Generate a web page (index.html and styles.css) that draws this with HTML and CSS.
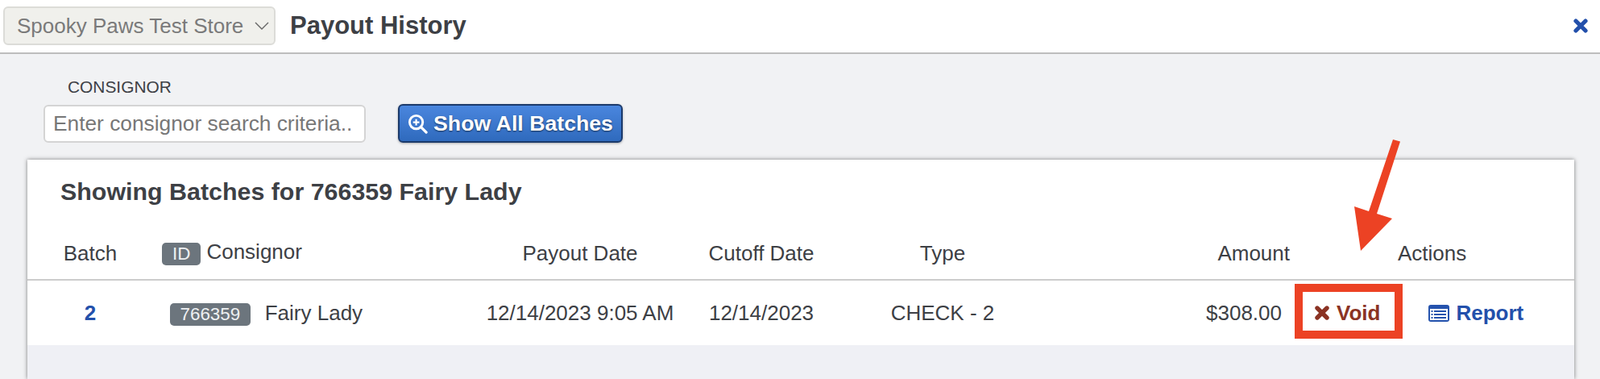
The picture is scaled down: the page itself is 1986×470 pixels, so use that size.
FILE: index.html
```html
<!DOCTYPE html>
<html lang="en">
<head>
    <meta charset="UTF-8">
    <meta name="viewport" content="width=device-width, initial-scale=1.0">
    <title>Payout History</title>
    <link rel="stylesheet" href="styles.css">
</head>
<body>
    <header class="top-bar">
        <div class="store-select">
            <span>Spooky Paws Test Store</span>
            <svg class="chevron" viewBox="0 0 18 10" width="18" height="10"><path d="M1 1l8 8 8-8" fill="none" stroke="#666" stroke-width="1.4"/></svg>
        </div>
        <h1 class="page-title">Payout History</h1>
        <svg class="close-icon" viewBox="0 0 18 18" width="18" height="18"><path d="M3 3l12 12M15 3L3 15" stroke="#2350ab" stroke-width="5.2" stroke-linecap="round"/></svg>
    </header>

    <main class="content">
        <div class="search-block">
            <label class="search-label" for="consignor">CONSIGNOR</label>
            <div class="search-row">
                <input class="search-input" id="consignor" type="text" placeholder="Enter consignor search criteria..">
                <button class="show-btn" type="button">
                    <svg viewBox="0 0 26 26" width="25" height="25"><circle cx="11" cy="11" r="8.5" fill="none" stroke="#fff" stroke-width="3"/><path d="M17 17l7 7" stroke="#fff" stroke-width="3.4" stroke-linecap="round"/><path d="M11 7v8M7 11h8" stroke="#fff" stroke-width="2.2"/></svg>
                    Show All Batches
                </button>
            </div>
        </div>

        <section class="card">
            <h2 class="card-title">Showing Batches for 766359 Fairy Lady</h2>
            <div class="grid head-row">
                <div class="center">Batch</div>
                <div class="consignor-head"><span class="badge">ID</span> Consignor</div>
                <div class="center">Payout Date</div>
                <div class="center">Cutoff Date</div>
                <div class="center">Type</div>
                <div class="right">Amount</div>
                <div class="actions-head">Actions</div>
            </div>
            <div class="grid data-row">
                <div class="center"><a class="batch-link" href="#">2</a></div>
                <div class="consignor-cell"><span class="badge">766359</span> Fairy Lady</div>
                <div class="center">12/14/2023 9:05 AM</div>
                <div class="center">12/14/2023</div>
                <div class="center">CHECK - 2</div>
                <div class="right amount">$308.00</div>
                <div class="actions">
                    <a class="void-link" href="#">
                        <svg viewBox="0 0 18 18" width="18" height="18"><path d="M3 3l12 12M15 3L3 15" stroke="#8b3324" stroke-width="5.4" stroke-linecap="round"/></svg>
                        Void
                    </a>
                    <a class="report-link" href="#">
                        <svg viewBox="0 0 26 21" width="26" height="21"><rect width="26" height="21" rx="3" fill="#2553ad"/><rect x="2" y="5" width="22" height="14" fill="#fff"/><path d="M3.500 8h2M3.500 12h2M3.500 16h2M7 8h15M7 12h15M7 16h15" stroke="#2553ad" stroke-width="1.800"/></svg>
                        Report
                    </a>
                </div>
            </div>
            <div class="card-fill"></div>

            <!-- annotation over the void link -->
            <div class="void-marker"></div>
            <svg class="void-arrow" viewBox="0 0 60 140" width="60" height="140"><path d="M51 0L60 2.500 31 92 50 98 11 138 3 83 21 89z" fill="#ec4224"/></svg>
        </section>
    </main>
</body>
</html>
```

FILE: styles.css
```css
* {
    margin: 0;
    padding: 0;
    box-sizing: border-box;
    font-family: "Liberation Sans", Arial, sans-serif;
}

:root {
    --text: #3d4045;
    --blue: #2350ab;
}

html, body {
    height: 470px;
    overflow: hidden;
}

body {
    background-color: #f1f2f4;
    color: var(--text);
    font-size: 26px;
}

.top-bar {
    height: 67px;
    padding: 8px 15px 0 4px;
    display: flex;
    align-items: flex-start;
    background-color: white;
    border-bottom: 2px solid #bdbdbd;
}

.store-select {
    width: 338px;
    height: 48px;
    padding: 0 6px 0 15px;
    display: flex;
    align-items: center;
    justify-content: space-between;
    color: #7a7a7a;
    background-color: #f0f0ec;
    border: 2px solid #dcdcd8;
    border-radius: 6px;
}

.page-title {
    margin: 6px 0 0 18px;
    font-size: 31px;
    line-height: 36px;
    font-weight: bold;
}

.close-icon {
    margin: 15px 0 0 auto;
}

.content {
    padding-top: 29px;
}

.search-block {
    margin-left: 54px;
}

.search-label {
    display: block;
    margin-left: 30px;
    font-size: 20.900px;
    line-height: 24px;
}

.search-row {
    margin-top: 10px;
    display: flex;
    gap: 40px;
}

.search-input {
    width: 400px;
    height: 47px;
    padding: 0 10px;
    font-size: 26.300px;
    background-color: white;
    border: 2px solid #d4d4d4;
    border-radius: 6px;
}

.search-input::placeholder {
    color: #777;
    opacity: 1;
}

.show-btn {
    width: 279px;
    height: 48px;
    margin-top: -1px;
    display: flex;
    align-items: center;
    justify-content: center;
    gap: 7px;
    color: white;
    font-size: 26.700px;
    font-weight: bold;
    text-shadow: 0 1px 2px rgba(0,0,0,0.6);
    background: linear-gradient(#4a86de, #2f6abd);
    border: 2px solid #1b3a6b;
    border-radius: 6px;
    box-shadow: 0 1px 3px rgba(0,0,0,0.3);
}

.card {
    position: relative;
    margin: 21px 32px 0 34px;
    height: 272px;
    background-color: white;
    box-shadow: 0 0 5px rgba(0,0,0,0.5);
}

.card-title {
    padding: 22px 0 0 41px;
    font-size: 30.400px;
    line-height: 34px;
    font-weight: bold;
}

.grid {
    display: grid;
    grid-template-columns: 156px 376px 308px 142px 308px 277px 1fr;
    align-items: center;
}

.center {
    text-align: center;
}

.right {
    text-align: right;
}

.head-row {
    margin-top: 38px;
    height: 56px;
    padding-bottom: 10px;
    border-bottom: 2px solid #ccc;
}

.actions-head {
    padding-left: 134px;
}

.badge {
    padding: 0 13px;
    height: 28px;
    line-height: 28px;
    font-size: 22.400px;
    color: #eef0f2;
    background-color: #6c757d;
    border-radius: 5px;
}

.consignor-head {
    display: flex;
    align-items: center;
    gap: 7px;
    padding-left: 11px;
    padding-bottom: 4px;
    white-space: nowrap;
}

.consignor-head .badge {
    margin-top: 6px;
}

.consignor-cell {
    display: flex;
    align-items: center;
    gap: 18px;
    padding-left: 21px;
    white-space: nowrap;
}

.consignor-cell .badge {
    padding: 0 12.500px;
    margin-top: 4px;
}

.data-row {
    height: 80px;
}

.batch-link {
    color: var(--blue);
    font-weight: bold;
    text-decoration: none;
}

.amount {
    padding-right: 10px;
}

.actions {
    display: flex;
    align-items: center;
    font-weight: bold;
    white-space: nowrap;
}

.actions a {
    display: flex;
    align-items: center;
    text-decoration: none;
}

.void-link {
    margin-left: 31px;
    gap: 9px;
    color: #8b3324;
}

.report-link {
    margin-left: 60px;
    gap: 8px;
    color: var(--blue);
}

.card-fill {
    height: 43px;
    background-color: #eff0f5;
}

.void-marker {
    position: absolute;
    left: 1573px;
    top: 154px;
    width: 134px;
    height: 68px;
    border: 10px solid #ec4224;
}

.void-arrow {
    position: absolute;
    left: 1644px;
    top: -25px;
    overflow: visible;
}
```
